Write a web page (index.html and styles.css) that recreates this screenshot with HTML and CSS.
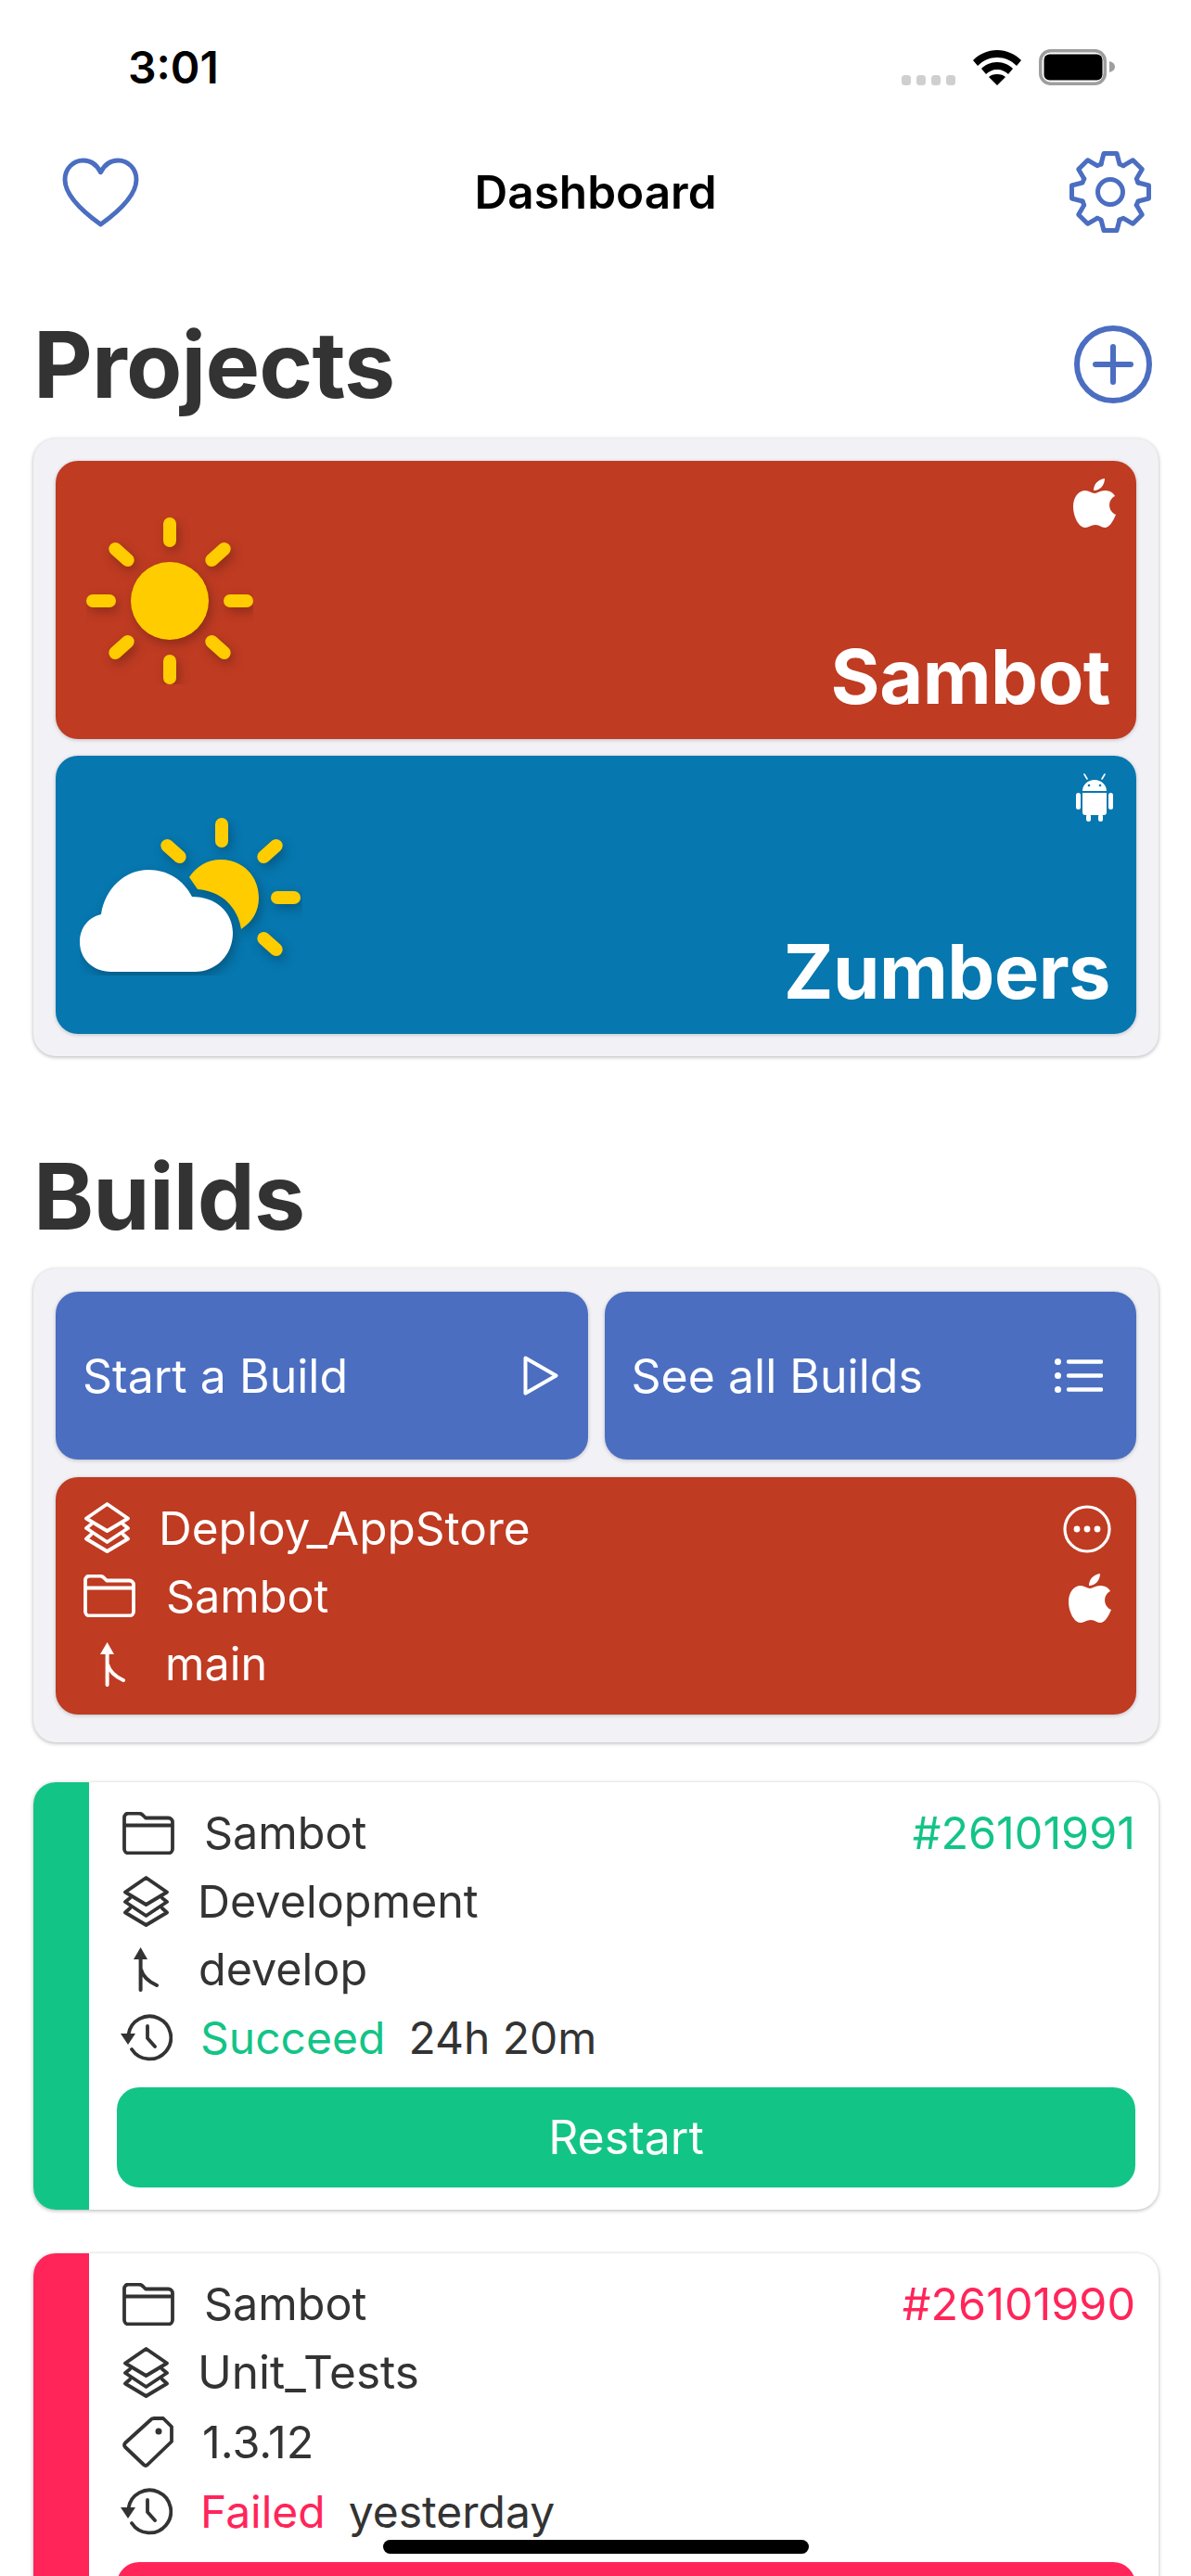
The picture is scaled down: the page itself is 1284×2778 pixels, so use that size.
FILE: index.html
```html
<!DOCTYPE html>
<html>
<head>
  <meta charset="utf-8">
  <meta name="viewport" content="width=device-width, initial-scale=1.0">
  <title>Dashboard</title>
  <link rel="stylesheet" href="styles.css">
</head>
<body>
<svg class="defs">
  <symbol id="i-folder" viewBox="0 0 56 46"><path d="M2 6a4.5 4.5 0 0 1 4.5-4.5h11c2 0 3 .6 4.5 2l3 3h24.5a4.5 4.5 0 0 1 4.5 4.5v29a4.5 4.5 0 0 1-4.5 4.5H6.5A4.5 4.5 0 0 1 2 40zM2 14.5h52" fill="none" stroke="currentColor" stroke-width="3.8" stroke-linejoin="round"/></symbol>
  <symbol id="i-layers" viewBox="0 0 51 55"><path d="M25.5 2 48 17.5 25.5 31 3 17.5zM8 24 3 28 25.5 43 48 28 43 24M8 35 3 39.5 25.5 53 48 39.5 43 35" fill="none" stroke="currentColor" stroke-width="3.8" stroke-linejoin="round" stroke-linecap="round"/></symbol>
  <symbol id="i-branch" viewBox="0 0 27 48"><path d="M7.6 11V46M8 24C10 31 16 37 25 41" fill="none" stroke="currentColor" stroke-width="4" stroke-linecap="round"/><path d="M0 13 7.6 0 15 13z" fill="currentColor"/></symbol>
  <symbol id="i-history" viewBox="0 0 56 51"><path d="M8.5 22A23 23 0 1 1 12 38M29 13V26L37 35" fill="none" stroke="currentColor" stroke-width="3.8" stroke-linecap="round" stroke-linejoin="round"/><path d="M0 21H16L8 33z" fill="currentColor"/></symbol>
  <symbol id="i-tag" viewBox="0 0 55 55"><path d="M34 2H44L53 11V27L27 52a3 3 0 0 1-4 0L3 33a3.5 3.5 0 0 1 0-4.5L30 4a5 5 0 0 1 4-2z" fill="none" stroke="currentColor" stroke-width="3.8" stroke-linejoin="round"/><circle cx="39" cy="16" r="3.5" fill="currentColor"/></symbol>
  <symbol id="i-apple" viewBox="0 0 46 54"><path d="M34 1c0 7-5 13-12 13 0-7 5-12 12-13zM23 17c3 0 6-3 11-3 5 0 9 2 11 6-8 4-8 16 1 20-3 7-7 14-12 14-4 0-5-3-10-3s-7 3-11 3C6 54 0 42 0 31c0-10 6-17 13-17 4 0 7 3 10 3z" fill="currentColor"/></symbol>
</svg>

<div class="status-bar">
  <span class="clock">3:01</span>
  <div class="status-icons">
    <svg class="signal" viewBox="0 0 58 11"><rect x="0" y="0" width="10" height="11" rx="3.5"/><rect x="16" y="0" width="10" height="11" rx="3.5"/><rect x="32" y="0" width="10" height="11" rx="3.5"/><rect x="48" y="0" width="10" height="11" rx="3.5"/></svg>
    <svg class="wifi" viewBox="0 0 52 38"><path d="M26 0C16 0 7 4 0 11l5 6C11 11 18 8 26 8s15 3 21 9l5-6C45 4 36 0 26 0zM26 13c-7 0-13 3-17 7l5 6c3-3 7-5 12-5s9 2 12 5l5-6c-4-4-10-7-17-7zM26 26c-4 0-7 1-9 3l9 9 9-9c-2-2-5-3-9-3z"/></svg>
    <svg class="battery" viewBox="0 0 82 39"><rect x="1.75" y="1.75" width="69.5" height="35.5" rx="11" fill="none" stroke="#9e9e9e" stroke-width="3.5"/><rect x="5.5" y="5.5" width="63" height="28" rx="6" fill="#000"/><path d="M76 13c4 1 6 3 6 6s-2 5-6 6z" fill="#9e9e9e"/></svg>
  </div>
</div>

<header class="nav-bar">
  <svg class="heart" viewBox="0 0 84 76"><path d="M42 16C38 8 31 3 23 3 12 3 3 12 3 24 3 42 24 60 42 73 60 60 81 42 81 24 81 12 72 3 61 3 53 3 46 8 42 16z" fill="none" stroke="currentColor" stroke-width="5" stroke-linejoin="round"/></svg>
  <h1 class="nav-title">Dashboard</h1>
  <svg class="gear" viewBox="0 0 88 88">
    <g fill="none" stroke="currentColor" stroke-width="5" stroke-linejoin="round" stroke-linecap="round">
      <polyline points="34,14 37,2.5 51,2.5 54,14 58.1,15.7"/>
      <polyline points="34,14 37,2.5 51,2.5 54,14 58.1,15.7" transform="rotate(45 44 44)"/>
      <polyline points="34,14 37,2.5 51,2.5 54,14 58.1,15.7" transform="rotate(90 44 44)"/>
      <polyline points="34,14 37,2.5 51,2.5 54,14 58.1,15.7" transform="rotate(135 44 44)"/>
      <polyline points="34,14 37,2.5 51,2.5 54,14 58.1,15.7" transform="rotate(180 44 44)"/>
      <polyline points="34,14 37,2.5 51,2.5 54,14 58.1,15.7" transform="rotate(225 44 44)"/>
      <polyline points="34,14 37,2.5 51,2.5 54,14 58.1,15.7" transform="rotate(270 44 44)"/>
      <polyline points="34,14 37,2.5 51,2.5 54,14 58.1,15.7" transform="rotate(315 44 44)"/>
      <circle cx="44" cy="44" r="13.5"/>
    </g>
  </svg>
</header>

<main class="page">
  <div class="section-head">
    <h2>Projects</h2>
    <svg class="add-icon" viewBox="0 0 84 84"><circle cx="42" cy="42" r="39" fill="none" stroke="currentColor" stroke-width="6"/><path d="M42 23V61M23 42H61" fill="none" stroke="currentColor" stroke-width="6" stroke-linecap="round"/></svg>
  </div>
  <section class="panel">
    <div class="project red">
      <svg class="weather" viewBox="0 0 180 180">
        <g fill="#ffcc00" class="soft">
          <circle cx="90" cy="90" r="42"/>
          <rect x="83" y="0" width="14" height="32" rx="7"/><rect x="83" y="148" width="14" height="32" rx="7"/>
          <rect x="0" y="83" width="32" height="14" rx="7"/><rect x="148" y="83" width="32" height="14" rx="7"/>
          <rect x="22" y="33" width="32" height="14" rx="7" transform="rotate(42 38 40)"/>
          <rect x="126" y="33" width="32" height="14" rx="7" transform="rotate(-42 142 40)"/>
          <rect x="22" y="133" width="32" height="14" rx="7" transform="rotate(-42 38 140)"/>
          <rect x="126" y="133" width="32" height="14" rx="7" transform="rotate(42 142 140)"/>
        </g>
      </svg>
      <svg class="platform apple"><use href="#i-apple"/></svg>
      <span class="project-name">Sambot</span>
    </div>
    <div class="project blue">
      <svg class="weather cloudy" viewBox="0 0 240 170">
        <g fill="#ffcc00" class="soft">
          <path d="M118 64C126 52 138 45 152 45 176 45 193 63 193 86 193 101 186 112 174 120 170 96 153 79 127 77z"/>
          <rect x="146" y="0" width="14" height="32" rx="7"/>
          <rect x="206" y="79" width="32" height="14" rx="7"/>
          <rect x="85" y="29" width="32" height="14" rx="7" transform="rotate(42 101 36)"/>
          <rect x="189" y="29" width="32" height="14" rx="7" transform="rotate(-42 205 36)"/>
          <rect x="189" y="129" width="32" height="14" rx="7" transform="rotate(42 205 136)"/>
        </g>
        <path class="soft" d="M34 166C14 166 0 152 0 134 0 118 10 107 23 104 27 76 49 56 74 56 95 56 112 67 121 85 147 85 165 102 165 124 165 148 147 166 124 166z" fill="#fff"/>
      </svg>
      <svg class="platform android" viewBox="0 0 40 52">
        <path d="M9 1 12 6M31 1 28 6" stroke="#fff" stroke-width="1.6" stroke-linecap="round"/>
        <path d="M7 19c0-7 6-12 13-12s13 5 13 12zM7 21h26v21a3 3 0 0 1-3 3H10a3 3 0 0 1-3-3z" fill="#fff"/>
        <rect x="0" y="21" width="5" height="18" rx="2.5" fill="#fff"/><rect x="35" y="21" width="5" height="18" rx="2.5" fill="#fff"/>
        <rect x="11" y="44" width="5" height="8" rx="2.5" fill="#fff"/><rect x="24" y="44" width="5" height="8" rx="2.5" fill="#fff"/>
        <circle cx="14" cy="13" r="1.3" fill="#0677af"/><circle cx="26" cy="13" r="1.3" fill="#0677af"/>
      </svg>
      <span class="project-name">Zumbers</span>
    </div>
  </section>

  <div class="section-head builds-head">
    <h2>Builds</h2>
  </div>
  <section class="panel builds">
    <div class="actions">
      <button class="action">
        <span>Start a Build</span>
        <svg class="action-icon" viewBox="0 0 38 43"><path d="M2.5 2.5 35.5 21.5 2.5 40.5z" fill="none" stroke="#fff" stroke-width="4" stroke-linejoin="round"/></svg>
      </button>
      <button class="action">
        <span>See all Builds</span>
        <svg class="action-icon list" viewBox="0 0 52 37"><circle cx="3.5" cy="3.5" r="3.5" fill="#fff"/><circle cx="3.5" cy="18.5" r="3.5" fill="#fff"/><circle cx="3.5" cy="33.5" r="3.5" fill="#fff"/><path d="M15 3.5H50M15 18.5H50M15 33.5H50" stroke="#fff" stroke-width="4.4" stroke-linecap="round"/></svg>
      </button>
    </div>
    <div class="config">
      <div class="config-rows">
        <div class="row"><svg class="row-icon layers"><use href="#i-layers"/></svg><span class="t-layers t-wide">Deploy_AppStore</span></div>
        <div class="row"><svg class="row-icon folder"><use href="#i-folder"/></svg><span class="t-folder">Sambot</span></div>
        <div class="row"><svg class="row-icon branch"><use href="#i-branch"/></svg><span class="t-branch">main</span></div>
      </div>
      <div class="config-side">
        <svg class="more" viewBox="0 0 52 52"><circle cx="26" cy="26" r="24" fill="none" stroke="#fff" stroke-width="3.2"/><circle cx="15" cy="26" r="3.4" fill="#fff"/><circle cx="26" cy="26" r="3.4" fill="#fff"/><circle cx="37" cy="26" r="3.4" fill="#fff"/></svg>
        <svg class="side-apple"><use href="#i-apple"/></svg>
      </div>
    </div>
  </section>

  <article class="build success">
    <div class="stripe"></div>
    <div class="build-body">
      <div class="row spread"><div class="row"><svg class="row-icon folder"><use href="#i-folder"/></svg><span class="t-folder card">Sambot</span></div><span class="build-no">#26101991</span></div>
      <div class="row"><svg class="row-icon layers"><use href="#i-layers"/></svg><span class="t-layers">Development</span></div>
      <div class="row"><svg class="row-icon branch card"><use href="#i-branch"/></svg><span class="t-branch">develop</span></div>
      <div class="row"><svg class="row-icon history"><use href="#i-history"/></svg><span class="t-history state">Succeed</span><span class="when">24h 20m</span></div>
      <button class="restart">Restart</button>
    </div>
  </article>

  <article class="build failed">
    <div class="stripe"></div>
    <div class="build-body">
      <div class="row spread"><div class="row"><svg class="row-icon folder"><use href="#i-folder"/></svg><span class="t-folder card">Sambot</span></div><span class="build-no">#26101990</span></div>
      <div class="row"><svg class="row-icon layers"><use href="#i-layers"/></svg><span class="t-layers t-wide">Unit_Tests</span></div>
      <div class="row tall"><svg class="row-icon tag"><use href="#i-tag"/></svg><span class="t-tag">1.3.12</span></div>
      <div class="row"><svg class="row-icon history"><use href="#i-history"/></svg><span class="t-history state">Failed</span><span class="when">yesterday</span></div>
      <div class="restart"></div>
    </div>
  </article>
</main>

<div class="home-indicator"></div>
</body>
</html>
```

FILE: styles.css
```css
* { box-sizing: border-box; }
html, body { height: 2778px; overflow: hidden; }
body { margin: 0; background: #fff; color: #333; font-family: Inter, "Liberation Sans", sans-serif; font-size: 48.5px; position: relative; }
h1, h2 { margin: 0; }
svg { display: block; flex: none; }
.defs { width: 0; height: 0; position: absolute; }

.status-bar { height: 159px; display: flex; justify-content: space-between; align-items: flex-start; padding: 47px 82px 0 138px; }
.clock { color: #000; font-size: 48px; font-weight: 600; line-height: 52px; }
.status-icons { display: flex; align-items: flex-end; gap: 19px; padding-top: 6px; }
.signal { width: 58px; height: 11px; fill: #cfcfcf; }
.wifi { width: 52px; height: 38px; fill: #000; }
.battery { width: 82px; height: 39px; }

.nav-bar { height: 96px; display: grid; grid-template-columns: 1fr auto 1fr; align-items: center; padding: 0 43px; color: #4b6ec1; }
.nav-title { color: #000; font-size: 49.5px; font-weight: 600; }
.heart { width: 83px; height: 75px; margin-left: 24px; }
.gear { width: 88px; height: 88px; justify-self: end; }

.page { padding: 0 35px 0 36px; }
.section-head { display: flex; justify-content: space-between; align-items: center; height: 110px; margin-top: 83px; margin-bottom: 25px; }
.section-head h2 { font-size: 98.5px; font-weight: 700; color: #333; letter-spacing: -0.8px; }
.add-icon { width: 84px; height: 84px; color: #4b6ec1; margin-right: 7px; }
.builds-head { margin-top: 96px; margin-bottom: 23px; }

.panel { background: #f1f1f6; border-radius: 24px; padding: 24px; box-shadow: 0 1px 4px rgba(0,0,0,.3); display: flex; flex-direction: column; gap: 18px; }
.panel.builds { padding: 25px 24px 30px; gap: 19px; }

.project { height: 300px; border-radius: 24px; box-shadow: 0 1px 4px rgba(0,0,0,.2); position: relative; color: #fff; display: flex; align-items: flex-end; justify-content: flex-end; padding: 0 28px 17px 0; }
.project.red { background: #bf3b22; }
.project.blue { background: #0677af; }
.project-name { font-size: 81px; font-weight: 700; line-height: 100px; letter-spacing: -0.5px; }
.weather { position: absolute; left: 33px; top: 61px; width: 180px; height: 180px; }
.weather.cloudy { left: 26px; top: 67px; width: 240px; height: 170px; }
.soft { filter: drop-shadow(3px 5px 6px rgba(0,0,0,.25)); }
.platform { position: absolute; }
.platform.apple { width: 46px; height: 54px; right: 22px; top: 18px; color: #fff; }
.platform.android { width: 40px; height: 52px; right: 25px; top: 19px; }

.actions { display: flex; gap: 18px; }
.action { flex: 1; height: 181px; border: none; border-radius: 24px; background: #4b6ec1; color: #fff; font: inherit; font-size: 50px; display: flex; align-items: center; justify-content: space-between; padding: 0 32px 0 29px; box-shadow: 0 1px 4px rgba(0,0,0,.2); }
.action-icon { width: 38px; height: 43px; }
.action-icon.list { width: 52px; height: 37px; margin-right: 4px; }

.config { height: 256px; border-radius: 24px; background: #bf3b22; color: #fff; display: flex; justify-content: space-between; padding: 18px 27px 0 30px; box-shadow: 0 1px 4px rgba(0,0,0,.2); }
.config-side { display: flex; flex-direction: column; align-items: flex-end; gap: 21px; padding-top: 12px; }
.more { width: 52px; height: 52px; }
.side-apple { width: 46px; height: 54px; color: #fff; }

.row { display: flex; align-items: center; height: 73.5px; }
.row.spread { justify-content: space-between; }
.row.tall { height: 77px; }
.row-icon.folder { width: 56px; height: 46px; }
.row-icon.layers { width: 51px; height: 55px; }
.row-icon.branch { width: 27px; height: 48px; margin-left: 18px; }
.row-icon.branch.card { margin-left: 12px; }
.row-icon.history { width: 56px; height: 51px; margin-left: -2px; }
.row-icon.tag { width: 55px; height: 55px; }
.t-layers { margin-left: 30px; }
.t-wide { font-size: 49.5px; }
.t-folder { margin-left: 33px; }
.t-folder.card { margin-left: 32px; }
.t-branch { margin-left: 43px; }
.t-history { margin-left: 30px; }
.t-tag { margin-left: 31px; }
.state, .when { font-size: 48px; }
.when { margin-left: 25px; }

.build { margin-top: 43px; height: 461px; display: flex; border-radius: 24px; background: #fff; box-shadow: 0 1px 4px rgba(0,0,0,.3); overflow: hidden; }
.build.failed { margin-top: 47px; }
.stripe { width: 60px; flex: none; }
.build-body { flex: 1; padding: 18px 25px 0 30px; }
.build-body > .row { padding-left: 6px; }
.build.success .stripe, .build.success .restart { background: #13c487; }
.build.failed .stripe, .build.failed .restart { background: #ff2559; }
.build.success .state, .build.success .build-no { color: #13c487; }
.build.failed .state, .build.failed .build-no { color: #ff2559; }
.restart { display: block; width: 100%; height: 108px; margin-top: 17px; border: none; border-radius: 24px; color: #fff; font: inherit; font-size: 50px; }

.home-indicator { position: absolute; left: 413px; top: 2739px; width: 459px; height: 15px; border-radius: 8px; background: #000; }
```
